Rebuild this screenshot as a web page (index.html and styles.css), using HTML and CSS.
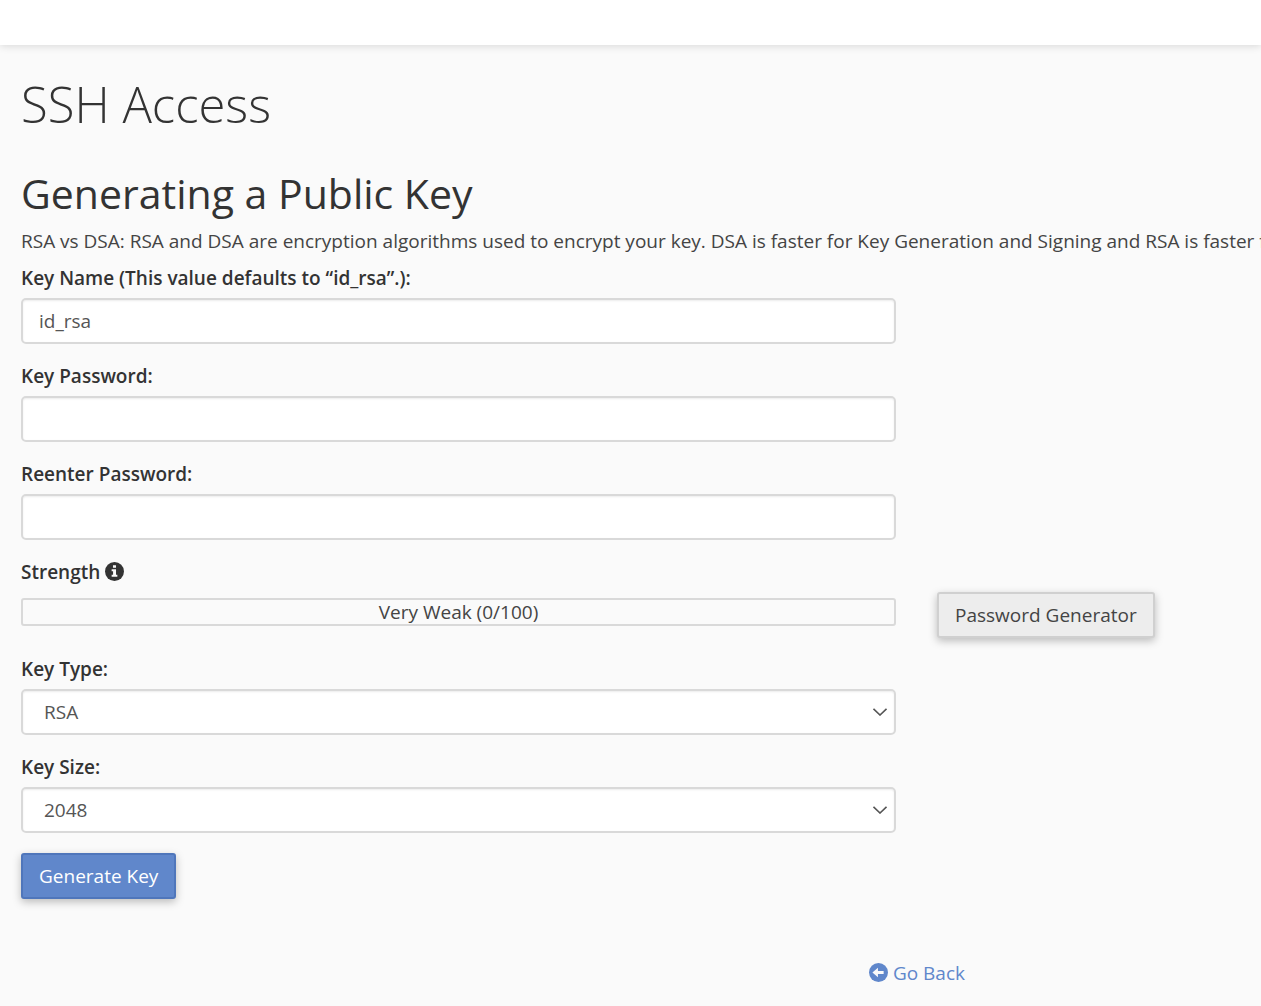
FILE: index.html
```
<!DOCTYPE html>
<html lang="en">
<head>
    <meta charset="UTF-8">
    <meta name="viewport" content="width=device-width, initial-scale=1.0">
    <title>SSH Access</title>
    <link rel="stylesheet" href="styles.css">
</head>
<body>
    <header class="top-bar"></header>

    <main class="content">
        <h1 class="page-title">SSH Access</h1>
        <h2 class="section-title">Generating a Public Key</h2>
        <p class="description">RSA vs DSA: RSA and DSA are encryption algorithms used to encrypt your key. DSA is faster for Key Generation and Signing and RSA is faster for</p>

        <form class="key-form">
            <div class="form-group">
                <label for="keyName">Key Name (This value defaults to “id_rsa”.):</label>
                <input class="form-control" type="text" id="keyName" value="id_rsa">
            </div>

            <div class="form-group">
                <label for="keyPassword">Key Password:</label>
                <input class="form-control" type="password" id="keyPassword">
            </div>

            <div class="form-group">
                <label for="keyPassword2">Reenter Password:</label>
                <input class="form-control" type="password" id="keyPassword2">
            </div>

            <!-- Password strength -->
            <div class="strength">
                <div class="strength-title" id="strengthLabel">
                    Strength
                    <svg class="icon" viewBox="0 0 20 20" aria-hidden="true">
                        <circle cx="10" cy="10" r="10" fill="#333"/>
                        <path fill="#fafafa" d="M8.4 3.4h3.2v2.7H8.4zM7 7.6h4.6v5.8H13v2.2H7v-2.2h1.5V9.7H7z"/>
                    </svg>
                </div>
                <div class="strength-bar" role="status" aria-labelledby="strengthLabel">Very Weak (0/100)</div>
                <button class="btn btn-default" type="button">Password Generator</button>
            </div>

            <div class="form-group">
                <label for="keyType">Key Type:</label>
                <select class="form-control" id="keyType">
                    <option>RSA</option>
                    <option>DSA</option>
                </select>
            </div>

            <div class="form-group">
                <label for="keySize">Key Size:</label>
                <select class="form-control" id="keySize">
                    <option>2048</option>
                    <option>4096</option>
                </select>
            </div>

            <button class="btn btn-primary" type="submit">Generate Key</button>
        </form>

        <div class="return-link">
            <a href="#">
                <svg class="icon" viewBox="0 0 20 20" aria-hidden="true">
                    <circle cx="10" cy="10" r="10" fill="#6087cb"/>
                    <path fill="#fafafa" d="M3.6 10l5.8-5v3.4h6v3.2h-6V15z"/>
                </svg>
                Go Back
            </a>
        </div>
    </main>
</body>
</html>
```
FILE: styles.css
```
* {
    box-sizing: border-box;
}

body {
    margin: 0;
    font-family: "Open Sans", sans-serif;
    font-size: 19px;
    line-height: 28px;
    color: #333;
    background-color: #fafafa;
    overflow-x: hidden;
}

.top-bar {
    height: 45px;
    background-color: #fff;
    box-shadow: 0 1px 8px rgba(0, 0, 0, 0.14);
}

.content {
    padding: 29px 21px;
}

.page-title {
    margin: 0;
    font-size: 49px;
    font-weight: 300;
    line-height: 60px;
}

.section-title {
    margin: 34px 0 9px;
    font-size: 41px;
    font-weight: 500;
    line-height: 50px;
}

.description {
    margin: 0 0 9px;
    color: #444;
    white-space: nowrap;
}

.form-group,
.strength {
    display: grid;
    grid-template-columns: 1fr 303px;
    column-gap: 41px;
    row-gap: 6px;
    margin-bottom: 18px;
}

.form-group label {
    grid-column: 1 / -1;
    font-weight: 600;
}

.form-control {
    width: 100%;
    height: 46px;
    padding: 0 16px;
    font: inherit;
    color: #555;
    background-color: #fff;
    border: 2px solid #d9d9d9;
    border-radius: 5px;
    box-shadow: inset 0 1px 2px rgba(0, 0, 0, 0.08);
}

select.form-control {
    appearance: none;
    padding: 0 21px;
    background-image: url("data:image/svg+xml,%3Csvg xmlns='http://www.w3.org/2000/svg' width='14' height='8'%3E%3Cpath d='M.5 .8l6.5 6.2 6.5-6.2' fill='none' stroke='%23555' stroke-width='1.6'/%3E%3C/svg%3E");
    background-repeat: no-repeat;
    background-position: right 7px center;
}

.icon {
    width: 19px;
    height: 19px;
    vertical-align: -2px;
}

/* Strength meter */
.strength {
    row-gap: 0;
    margin-bottom: 17px;
}

.strength-title {
    grid-column: 1 / -1;
    font-weight: 600;
}

.strength-bar {
    height: 28px;
    margin-top: 12px;
    line-height: 24px;
    color: #444;
    text-align: center;
    border: 2px solid #d9d9d9;
    border-radius: 3px;
}

.btn {
    justify-self: start;
    height: 46px;
    padding: 0 16px;
    font: inherit;
    border: 2px solid;
    border-radius: 3px;
    box-shadow: 0 3px 8px rgba(0, 0, 0, 0.25);
    cursor: pointer;
}

.btn-default {
    margin-top: 6px;
    color: #444;
    background-color: #ededed;
    border-color: #d0d0d0;
}

.btn-primary {
    margin-top: 2px;
    color: #fff;
    background-color: #6087cb;
    border-color: #4f76bb;
}

.return-link {
    margin-top: 60px;
    padding-right: 275px;
    text-align: right;
}

.return-link a {
    color: #6087cb;
    text-decoration: none;
}
```
